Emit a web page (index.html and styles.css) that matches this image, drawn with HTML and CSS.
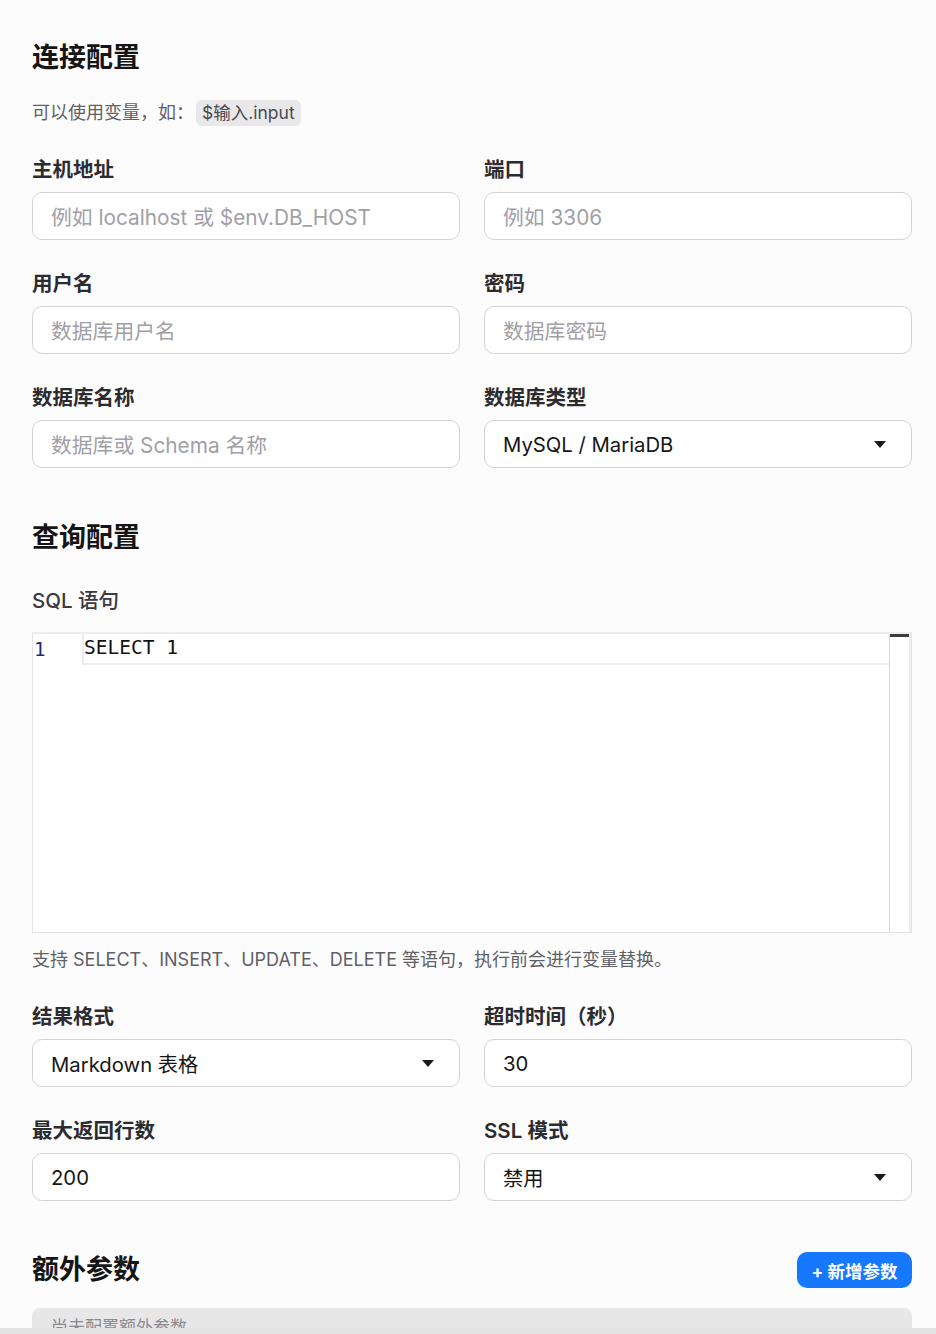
FILE: index.html
```html
<!DOCTYPE html>
<html lang="zh">
<head>
<meta charset="utf-8">
<link rel="stylesheet" href="styles.css">
</head>
<body>
<main class="page">
  <h2 class="sec-title">连接配置</h2>
  <p class="hint">可以使用变量，如：<code class="chip">$输入.input</code></p>

  <div class="grid">
    <div class="field">
      <label class="label">主机地址</label>
      <div class="input placeholder">例如 localhost 或 $env.DB_HOST</div>
    </div>
    <div class="field">
      <label class="label">端口</label>
      <div class="input placeholder">例如 3306</div>
    </div>
    <div class="field">
      <label class="label">用户名</label>
      <div class="input placeholder">数据库用户名</div>
    </div>
    <div class="field">
      <label class="label">密码</label>
      <div class="input placeholder">数据库密码</div>
    </div>
    <div class="field">
      <label class="label">数据库名称</label>
      <div class="input placeholder">数据库或 Schema 名称</div>
    </div>
    <div class="field">
      <label class="label">数据库类型</label>
      <div class="input select"><span>MySQL / MariaDB</span><svg class="caret" width="12" height="7" viewBox="0 0 12 7"><path d="M0 0H12L6 7Z" fill="#1a1a1a"/></svg></div>
    </div>
  </div>

  <h2 class="sec-title query">查询配置</h2>
  <div class="sql-label">SQL 语句</div>
  <div class="editor">
    <div class="gutter"><span class="ln">1</span></div>
    <div class="code">
      <div class="active-line">SELECT 1</div>
    </div>
    <div class="vscroll"><div class="thumb"></div></div>
  </div>
  <p class="help">支持 SELECT、INSERT、UPDATE、DELETE 等语句，执行前会进行变量替换。</p>

  <div class="grid">
    <div class="field">
      <label class="label">结果格式</label>
      <div class="input select"><span>Markdown 表格</span><svg class="caret" width="12" height="7" viewBox="0 0 12 7"><path d="M0 0H12L6 7Z" fill="#1a1a1a"/></svg></div>
    </div>
    <div class="field">
      <label class="label">超时时间（秒）</label>
      <div class="input">30</div>
    </div>
    <div class="field">
      <label class="label">最大返回行数</label>
      <div class="input">200</div>
    </div>
    <div class="field">
      <label class="label">SSL 模式</label>
      <div class="input select"><span>禁用</span><svg class="caret" width="12" height="7" viewBox="0 0 12 7"><path d="M0 0H12L6 7Z" fill="#1a1a1a"/></svg></div>
    </div>
  </div>

  <div class="extra-head">
    <h2 class="sec-title">额外参数</h2>
    <button class="add-btn">+ 新增参数</button>
  </div>
  <div class="empty">尚未配置额外参数</div>
</main>
<div class="bottom-bar"></div>
</body>
</html>
```
FILE: styles.css
```css
* { box-sizing: border-box; }
html, body {
  margin: 0;
  padding: 0;
  background: #fdfcfd;
  font-family: Inter, "Noto Sans CJK SC", sans-serif;
  color: #1f1f1f;
}
.page {
  padding: 40px 24px 0 32px;
  height: 1334px;
  overflow: hidden;
}
.sec-title {
  margin: 0;
  font-size: 27px;
  line-height: 36px;
  font-weight: 700;
  color: #151515;
}
.hint {
  margin: 24px 0 31px;
  font-size: 18px;
  line-height: 26px;
  color: #5f5f66;
  display: flex;
  align-items: center;
}
.chip {
  font-family: Inter, "Noto Sans CJK SC", sans-serif;
  background: #e8e8ea;
  color: #4a4a50;
  border-radius: 6px;
  padding: 0 6px;
  margin-left: 2px;
  font-size: 17.5px;
  line-height: 26px;
}
.grid {
  display: grid;
  grid-template-columns: 1fr 1fr;
  column-gap: 24px;
  row-gap: 31px;
}
.field {
  display: flex;
  flex-direction: column;
  gap: 9px;
}
.label {
  font-size: 20.5px;
  line-height: 26px;
  font-weight: 600;
  color: #2b2b30;
}
.input {
  height: 48px;
  border: 1px solid #d3d3d6;
  border-radius: 10px;
  background: #fff;
  padding: 0 18px;
  display: flex;
  align-items: center;
  font-size: 20.3px;
  color: #161616;
}
.placeholder { color: #a0a0a6; font-size: 20.8px; }
.select { justify-content: space-between; padding-right: 25px; }
.caret { flex: none; }
.sec-title.query { margin-top: 52px; }
.sql-label {
  margin-top: 32px;
  font-size: 20.5px;
  line-height: 26px;
  font-weight: 500;
  color: #3a3a40;
}
.editor {
  margin-top: 18px;
  height: 301px;
  border: 1px solid #e4e4e6;
  border-top: 2px solid #ececee;
  background: #fff;
  display: flex;
}
.gutter {
  width: 51px;
  flex: none;
  padding: 1px 0 0 1px;
}
.ln {
  font-family: "DejaVu Sans Mono", monospace;
  font-size: 19px;
  line-height: 28px;
  color: #1b2a7a;
}
.code { flex: 1; }
.active-line {
  height: 31px;
  border: 2px solid #ececec;
  border-right: none;
  border-top: none;
  font-family: "DejaVu Sans Mono", monospace;
  font-size: 19.5px;
  line-height: 28px;
  color: #111;
  margin-left: -2px;
  white-space: pre;
}
.vscroll {
  width: 22px;
  flex: none;
  border-left: 1px solid #d8d8d8;
  border-right: 2px solid #ececec;
}
.thumb { height: 3px; background: #3c3c3c; }
.help {
  margin: 14px 0 31px;
  font-size: 18px;
  line-height: 26px;
  color: #5f5f66;
}
.extra-head {
  margin-top: 51px;
  display: flex;
  justify-content: space-between;
  align-items: center;
}
.add-btn {
  height: 36px;
  width: 115px;
  border: none;
  border-radius: 10px;
  background: #1677ff;
  color: #fff;
  font-family: Inter, "Noto Sans CJK SC", sans-serif;
  font-size: 17.5px;
  font-weight: 700;
  padding: 0;
}
.empty {
  margin-top: 20px;
  height: 80px;
  background: #e7e7e8;
  border-radius: 8px;
  padding: 6px 19px;
  font-size: 17px;
  line-height: 26px;
  color: #8a8a90;
}
.bottom-bar {
  position: fixed;
  left: 0;
  right: 0;
  bottom: 0;
  height: 6px;
  background: #e3e3e3;
}
```
